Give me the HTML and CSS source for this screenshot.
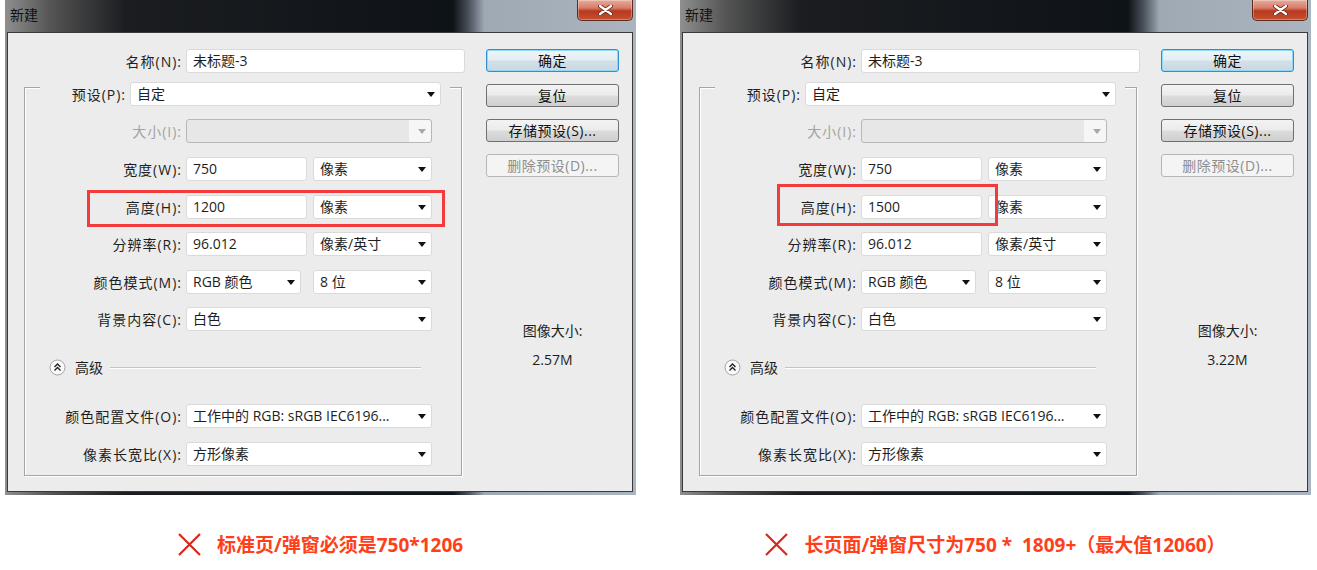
FILE: index.html
```html
<!DOCTYPE html>
<html lang="zh-CN">
<head>
    <meta charset="UTF-8">
    <title>新建文档尺寸对比</title>
    <link rel="stylesheet" href="styles.css">
</head>
<body>
    <div class="pair">
        <!-- standard page -->
        <div class="shot">
            <div class="dialog">
                <div class="titlebar">
                    <span class="title">新建</span>
                    <span class="close">
                        <svg width="15" height="10" viewBox="0 0 15 10"><path d="M2 1 L13 9 M13 1 L2 9" stroke="#5a2418" stroke-width="4" stroke-linecap="round"/><path d="M2 1 L13 9 M13 1 L2 9" stroke="#fff" stroke-width="2.4" stroke-linecap="round"/></svg>
                    </span>
                </div>
                <div class="client">
                    <div class="form-col">
                        <div class="row name-row">
                            <span class="lbl">名称(N):</span>
                            <div class="field w-name">未标题-3</div>
                        </div>
                        <div class="group">
                            <div class="row preset-row">
                                <span class="lbl">预设(P):</span>
                                <div class="field select w-preset">自定</div>
                            </div>
                            <div class="row first">
                                <span class="lbl off">大小(I):</span>
                                <div class="field select disabled w-full"></div>
                            </div>
                            <div class="row">
                                <span class="lbl">宽度(W):</span>
                                <div class="field w-num">750</div>
                                <div class="field select w-unit">像素</div>
                            </div>
                            <div class="row">
                                <span class="lbl">高度(H):</span>
                                <div class="field w-num">1200</div>
                                <div class="field select w-unit">像素</div>
                            </div>
                            <div class="row tight">
                                <span class="lbl">分辨率(R):</span>
                                <div class="field w-num">96.012</div>
                                <div class="field select w-unit">像素/英寸</div>
                            </div>
                            <div class="row">
                                <span class="lbl">颜色模式(M):</span>
                                <div class="field select w-mode">RGB 颜色</div>
                                <div class="field select w-unit">8 位</div>
                            </div>
                            <div class="row tight">
                                <span class="lbl">背景内容(C):</span>
                                <div class="field select w-full">白色</div>
                            </div>
                            <div class="adv-row">
                                <svg class="adv-icon" width="17" height="17" viewBox="0 0 17 17"><circle cx="8.5" cy="8.5" r="7.5" fill="#fafafa" stroke="#a3a3a3"/><path d="M5.5 8 L8.5 5 L11.5 8 M5.5 11.5 L8.5 8.5 L11.5 11.5" fill="none" stroke="#222" stroke-width="1.4"/></svg>
                                <span class="adv-text">高级</span>
                                <span class="adv-line"></span>
                            </div>
                            <div class="row profile">
                                <span class="lbl">颜色配置文件(O):</span>
                                <div class="field select w-full">工作中的 RGB: sRGB IEC6196...</div>
                            </div>
                            <div class="row">
                                <span class="lbl">像素长宽比(X):</span>
                                <div class="field select w-full">方形像素</div>
                            </div>
                        </div>
                    </div>
                    <div class="btn-col">
                        <div class="btn default">确定</div>
                        <div class="btn">复位</div>
                        <div class="btn">存储预设(S)...</div>
                        <div class="btn disabled">删除预设(D)...</div>
                        <div class="size-info">
                            <div>图像大小:</div>
                            <div class="size-val">2.57M</div>
                        </div>
                    </div>
                </div>
                <div class="mark mark-std"></div>
            </div>
            <p class="caption">
                <svg width="23" height="23" viewBox="0 0 23 23"><path d="M1 1 L22 22 M22 1 L1 22" stroke="#d8281c" stroke-width="2.2"/></svg>
                <span>标准页/弹窗必须是750*1206</span>
            </p>
        </div>

        <!-- long page -->
        <div class="shot">
            <div class="dialog">
                <div class="titlebar">
                    <span class="title">新建</span>
                    <span class="close">
                        <svg width="15" height="10" viewBox="0 0 15 10"><path d="M2 1 L13 9 M13 1 L2 9" stroke="#5a2418" stroke-width="4" stroke-linecap="round"/><path d="M2 1 L13 9 M13 1 L2 9" stroke="#fff" stroke-width="2.4" stroke-linecap="round"/></svg>
                    </span>
                </div>
                <div class="client">
                    <div class="form-col">
                        <div class="row name-row">
                            <span class="lbl">名称(N):</span>
                            <div class="field w-name">未标题-3</div>
                        </div>
                        <div class="group">
                            <div class="row preset-row">
                                <span class="lbl">预设(P):</span>
                                <div class="field select w-preset">自定</div>
                            </div>
                            <div class="row first">
                                <span class="lbl off">大小(I):</span>
                                <div class="field select disabled w-full"></div>
                            </div>
                            <div class="row">
                                <span class="lbl">宽度(W):</span>
                                <div class="field w-num">750</div>
                                <div class="field select w-unit">像素</div>
                            </div>
                            <div class="row">
                                <span class="lbl">高度(H):</span>
                                <div class="field w-num">1500</div>
                                <div class="field select w-unit">像素</div>
                            </div>
                            <div class="row tight">
                                <span class="lbl">分辨率(R):</span>
                                <div class="field w-num">96.012</div>
                                <div class="field select w-unit">像素/英寸</div>
                            </div>
                            <div class="row">
                                <span class="lbl">颜色模式(M):</span>
                                <div class="field select w-mode">RGB 颜色</div>
                                <div class="field select w-unit">8 位</div>
                            </div>
                            <div class="row tight">
                                <span class="lbl">背景内容(C):</span>
                                <div class="field select w-full">白色</div>
                            </div>
                            <div class="adv-row">
                                <svg class="adv-icon" width="17" height="17" viewBox="0 0 17 17"><circle cx="8.5" cy="8.5" r="7.5" fill="#fafafa" stroke="#a3a3a3"/><path d="M5.5 8 L8.5 5 L11.5 8 M5.5 11.5 L8.5 8.5 L11.5 11.5" fill="none" stroke="#222" stroke-width="1.4"/></svg>
                                <span class="adv-text">高级</span>
                                <span class="adv-line"></span>
                            </div>
                            <div class="row profile">
                                <span class="lbl">颜色配置文件(O):</span>
                                <div class="field select w-full">工作中的 RGB: sRGB IEC6196...</div>
                            </div>
                            <div class="row">
                                <span class="lbl">像素长宽比(X):</span>
                                <div class="field select w-full">方形像素</div>
                            </div>
                        </div>
                    </div>
                    <div class="btn-col">
                        <div class="btn default">确定</div>
                        <div class="btn">复位</div>
                        <div class="btn">存储预设(S)...</div>
                        <div class="btn disabled">删除预设(D)...</div>
                        <div class="size-info">
                            <div>图像大小:</div>
                            <div class="size-val">3.22M</div>
                        </div>
                    </div>
                </div>
                <div class="mark mark-long"></div>
            </div>
            <p class="caption">
                <svg width="23" height="23" viewBox="0 0 23 23"><path d="M1 1 L22 22 M22 1 L1 22" stroke="#d8281c" stroke-width="2.2"/></svg>
                <span>长页面/弹窗尺寸为750 *&nbsp; 1809+（最大值12060）</span>
            </p>
        </div>
    </div>
</body>
</html>
```

FILE: styles.css
```css
body {
    margin: 0;
    background: #fff;
    font-family: 'Open Sans', 'Noto Sans CJK SC', sans-serif;
    font-size: 14px;
    color: #1e1e1e;
}
.pair {
    display: flex;
    gap: 44px;
    padding-left: 5px;
}
.shot {
    width: 631px;
}

/* window frame */
.dialog {
    position: relative;
    height: 495px;
    box-sizing: border-box;
    padding: 0 3px 3px 2px;
    display: flex;
    flex-direction: column;
    background: linear-gradient(90deg, #8f8f8f 0, #555 45px, #1b1d20 120px, #0e1318 71%, #4a525b 73.5%, #9ea9b4 76%, #aab5c0 100%);
}
.titlebar {
    height: 32px;
    display: flex;
    justify-content: space-between;
    align-items: flex-start;
    flex-shrink: 0;
}
.title {
    padding: 5px 0 0 3px;
    line-height: 20px;
    color: #111;
}
.close {
    width: 56px;
    height: 21px;
    box-sizing: border-box;
    border: 1px solid #5e2a20;
    border-top: none;
    border-radius: 0 0 5px 5px;
    background: linear-gradient(#e8ab9d 0, #d77b68 40%, #b9391f 55%, #c4502f 100%);
    box-shadow: inset 0 0 0 1px rgba(255, 255, 255, 0.3);
    display: flex;
    align-items: center;
    justify-content: center;
}
.client {
    flex: 1;
    display: flex;
    background: #ececec;
    border: 1px solid #3a3a3a;
}

/* form */
.form-col {
    width: 460px;
    padding-top: 16px;
}
.row {
    display: flex;
    align-items: center;
    height: 24px;
    gap: 5px;
}
.row + .row {
    margin-top: 14px;
}
.row.tight {
    margin-top: 13px;
}
.lbl {
    width: 157px;
    text-align: right;
    white-space: nowrap;
    letter-spacing: 1px;
}
.lbl.off {
    color: #a3a3a3;
}
.name-row {
    padding-left: 16px;
}
.name-row .lbl {
    width: 158px;
}
.field {
    height: 24px;
    box-sizing: border-box;
    border: 1px solid #dadada;
    border-radius: 3px;
    background: #fff;
    padding-left: 6px;
    line-height: 22px;
    white-space: nowrap;
    overflow: hidden;
}
.select {
    position: relative;
    padding-right: 20px;
}
.select::after {
    content: '';
    position: absolute;
    right: 5px;
    top: 9px;
    border-left: 4.5px solid transparent;
    border-right: 4.5px solid transparent;
    border-top: 5px solid #111;
}
.select.disabled {
    border-color: #b8b8b8;
    background: linear-gradient(90deg, #e7e7e7 calc(100% - 22px), #f6f6f6 0);
}
.select.disabled::after {
    border-top-color: #a8a8a8;
}
.w-name { width: 279px; margin-left: -1px; }
.w-preset { width: 311px; }
.w-full { width: 246px; margin-left: -1px; }
.w-num { width: 121px; margin-left: -1px; }
.w-unit { width: 119px; margin-left: 1px; }
.w-mode { width: 115px; margin: 0 6px 0 -1px; }

/* group box */
.group {
    margin: 14px 0 0 16px;
    width: 438px;
    box-sizing: border-box;
    border: 1px solid #a5a5a5;
    box-shadow: inset 1px 1px 0 #fff, 1px 1px 0 #fff;
    padding-bottom: 9px;
}
.preset-row {
    margin: -6px 0 0 15px;
    width: 410px;
    background: #ececec;
}
.preset-row .lbl {
    width: 86px;
}
.preset-row .w-preset {
    margin-left: -1px;
}
.row.first {
    margin-top: 13px;
}
.adv-row {
    display: flex;
    align-items: center;
    height: 24px;
    margin: 24px 40px 0 0;
    padding-left: 24px;
}
.adv-icon {
    flex-shrink: 0;
}
.adv-text {
    margin-left: 9px;
}
.adv-line {
    flex: 1;
    height: 1px;
    margin-left: 7px;
    background: #c4c4c4;
    box-shadow: 0 1px 0 #fff;
}
.row.profile {
    margin-top: 25px;
}

/* buttons */
.btn-col {
    padding: 16px 0 0 18px;
    width: 133px;
}
.btn {
    height: 23px;
    box-sizing: border-box;
    border: 1px solid #707070;
    border-radius: 3px;
    background: linear-gradient(#f3f3f3 0, #ebebeb 48%, #dcdcdc 52%, #cfcfcf 100%);
    text-align: center;
    line-height: 21px;
    margin-bottom: 12px;
    color: #111;
    letter-spacing: 0.5px;
}
.btn.default {
    border-color: #2c8fd6;
    box-shadow: inset 0 0 0 1px #90d8f7;
    background: linear-gradient(#eef5f9 0, #e4edf2 48%, #d4e0e8 52%, #cad7e0 100%);
}
.btn.disabled {
    border-color: #b3b7ba;
    background: #f4f4f4;
    color: #8e8e8e;
}
.size-info {
    margin-top: 145px;
    text-align: center;
    line-height: 18px;
}
.size-val {
    margin-top: 11px;
}

/* red annotation frames */
.mark {
    position: absolute;
    box-sizing: border-box;
    border: 3px solid #f43a3a;
}
.mark-std {
    left: 82px;
    top: 190px;
    width: 358px;
    height: 37px;
}
.mark-long {
    left: 97px;
    top: 184px;
    width: 221px;
    height: 42px;
}

.caption {
    margin: 37px 0 0;
    display: flex;
    justify-content: center;
    align-items: center;
    gap: 16px;
    height: 24px;
    font-size: 19px;
    font-weight: bold;
    color: #ff3f1c;
}
```
